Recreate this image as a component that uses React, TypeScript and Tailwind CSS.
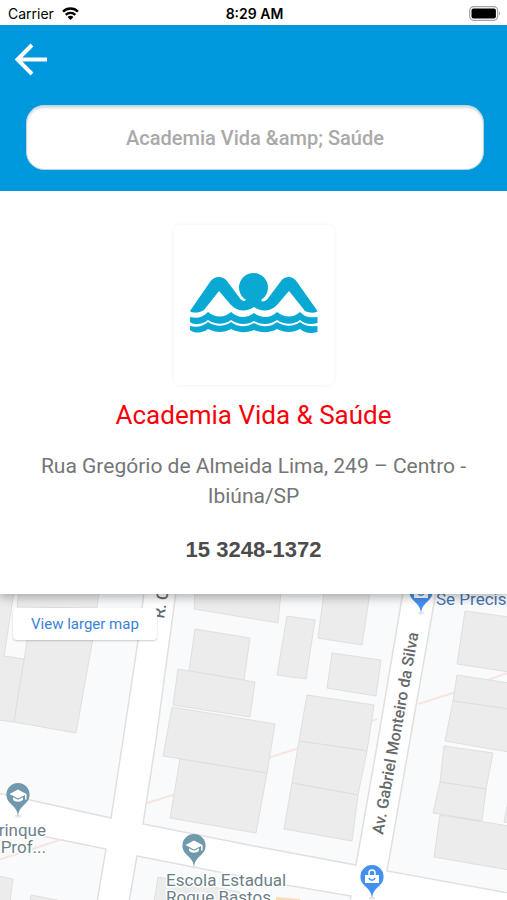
import { useState } from "react";

const blocks = [
    "-2,-2 144,-2 138,47 123,146 111,224 30,206 -2,199",
    "176,-2 156,146 143,230 254,252 356,271 378,146 403,-2",
    "436,-2 410,146 387,277 509,299 509,-2",
    "-2,233 47,243 106,255 97,308 -2,308",
    "137,262 286,291 351,302 350,308 129,308",
];

const buildings = [
    "-2,-2 14,-2 4,62 24,65 14,128 -2,126",
    "19,-2 99,-2 97,14 17,13",
    "29,35 93,44 76,139 14,128",
    "195,-2 281,-2 278,29 194,15",
    "195,35 250,44 244,86 189,77",
    "178,75 255,88 250,123 173,111",
    "172,113 275,130 267,179 163,162",
    "180,165 267,179 256,239 170,224",
    "287,22 315,26 306,85 277,81",
    "324,-2 370,-2 362,51 318,44",
    "332,59 381,66 376,102 327,94",
    "307,101 374,111 367,157 299,147",
    "299,147 367,157 358,201 292,189",
    "292,189 358,201 352,247 284,235",
    "465,17 509,23 509,78 457,70",
    "457,81 509,89 509,115 453,107",
    "453,107 509,115 509,158 445,147",
    "444,152 493,159 486,195 440,188",
    "440,188 486,195 482,227 433,219",
    "440,221 509,232 509,276 434,263",
    "507,212 509,212 509,229 504,228",
    "-2,282 13,285 10,308 -2,308",
    "31,301 62,307 30,308",
    "158,283 240,298 238,308 154,308",
];

function Pin({ x, y, color, type }: { x: number; y: number; color: string; type: "school" | "shop" }) {
    return (
        <g transform={`translate(${x} ${y})`}>
            <ellipse cx="0" cy="21" rx="3" ry="1.5" fill="#e6e6e6" />
            <path d="M0 21C-1 14-4 12-8 8A11.6 11.6 0 1 1 8 8C4 12 1 14 0 21Z" fill={color} />
            {type === "school" ? (
                <g fill="#fff">
                    <path d="M-8.500 -1L0 -5.500L8.500 -1V4.500H7V0L0 3.500Z" />
                    <path d="M-5 2.200L0 4.800L5 2.200V4.500C3 7.500-3 7.500-5 4.500Z" />
                </g>
            ) : (
                <g>
                    <path d="M-7 -2H7V6H-7Z" fill="#fff" />
                    <path d="M-3 -2V-4A3 3 0 0 1 3 -4V-2" fill="none" stroke="#fff" strokeWidth="1.5" />
                    <path d="M-3 1C-2 4 2 4 3 1" fill="none" stroke={color} strokeWidth="1.5" />
                </g>
            )}
        </g>
    );
}

function StatusBar() {
    return (
        <div className="grid h-[25px] grid-cols-3 items-center bg-white pl-2 pr-[6px] pt-[2px] font-[Inter,sans-serif] text-sm text-black">
            <div className="flex items-center gap-2">
                <span>Carrier</span>
                <svg width="17" height="13" viewBox="0 0 17 13" fill="none" stroke="#000" strokeWidth="2.4">
                    <path d="M1 4.6C5.2 .5 11.8 .5 16 4.6" />
                    <path d="M3.7 7.800C6.300 5.200 10.700 5.200 13.300 7.800" />
                    <path d="M8.5 13L5.6 10C7.200 8.400 9.800 8.400 11.400 10Z" fill="#000" stroke="none" />
                </svg>
            </div>
            <span className="text-center font-semibold">8:29 AM</span>
            <svg className="justify-self-end" width="32" height="15" viewBox="0 0 32 15">
                <rect x=".7" y=".7" width="28" height="13.6" rx="4" fill="none" stroke="#a3a3a3" strokeWidth="1.2" />
                <rect x="2.5" y="2.5" width="24.4" height="10" rx="2" fill="#000" />
                <path d="M30 5.5Q32 7.5 30 9.5Z" fill="#a3a3a3" />
            </svg>
        </div>
    );
}

function Logo() {
    return (
        <svg width="128" height="60" viewBox="0 0 128 60" fill="#09a9d3" role="img" aria-label="Academia Vida & Saúde">
            <circle cx="63.500" cy="14.500" r="14.500" />
            <path d="M0 38L20 9C24 2.500 33 2.500 37 8L49 24C51 27 53 28.500 55 28L56 26H71L72 28.500C75 28.500 77 27 79 24L91 8C95 2.500 103 2.500 107 9L127.500 38C126 40.500 119 40 115 38L99 18L87 32C80 39 71 39 64 34C57 39 48 39 41 32L29 18L14 37C10 40 2 40.500 0 38Z" />
            <path d="M0 44C8 46 13 44 18 39C26 45 34 45 41 39C49 46 57 45 64 40C71 45 80 46 87 39C95 45 103 45 110 39C115 44 120 45 127.500 44V50C120 52 115 51 110 47C103 52 95 52 87 47C80 52 71 52 64 48C57 52 49 52 41 47C34 52 26 52 18 47C13 51 5 53 0 49Z" />
            <path d="M0 53C8 55 13 53 18 49C26 54 34 54 41 49C49 55 57 54 64 50C71 54 80 55 87 49C95 54 103 54 110 49C115 53 120 54 127.500 53V59C120 61 115 60 110 56C103 60 95 60 87 56C80 60 71 60 64 57C57 60 49 60 41 56C34 60 26 60 18 56C13 60 5 61 0 57Z" />
        </svg>
    );
}

function Map() {
    return (
        <svg className="block h-full w-full" viewBox="0 0 507 306" preserveAspectRatio="xMidYMin slice" fontFamily="Roboto, sans-serif" fontSize="17">
            <rect x="-2" y="-2" width="511" height="310" fill="#fff" />
            <g fill="#f8fafb" stroke="#dfe0e0" strokeWidth="1.5">
                {blocks.map((b) => <polygon key={b} points={b} />)}
            </g>
            <g fill="none" stroke="#fae3e3" strokeWidth="2">
                <path d="M-2 266L60 246" />
                <path d="M147 209L173 201L271 163L296 155L377 125M418 110L453 99L507 79" />
            </g>
            <g fill="#ececec" stroke="#dfdfdf" strokeWidth="1">
                {buildings.map((b) => <polygon key={b} points={b} />)}
            </g>
            <path d="M276 303L300 305V308H276Z" fill="#fbdcb5" />

            <g fill="#66696c" stroke="#fff" strokeWidth="3" paintOrder="stroke" fontSize="16" fontWeight="500">
                <text transform="translate(164 25) rotate(-81)">R. C</text>
                <text transform="translate(383 241) rotate(-80)">Av. Gabriel Monteiro da Silva</text>
            </g>

            <Pin x={421} y={-2} color="#4490ed" type="shop" />
            <Pin x={372} y={283} color="#4490ed" type="shop" />
            <Pin x={18} y={201} color="#7199ad" type="school" />
            <Pin x={194} y={252} color="#7199ad" type="school" />

            <g fill="#6c7f88" stroke="#fff" strokeWidth="3" paintOrder="stroke">
                <text x="46" y="242" textAnchor="end">rinque</text>
                <text x="46" y="259" textAnchor="end">Prof...</text>
                <text x="166" y="292">Escola Estadual</text>
                <text x="166" y="309">Roque Bastos</text>
                <text x="436" y="11" fill="#4475b8">Se Precis</text>
            </g>
        </svg>
    );
}

export default function App() {
    const [search, setSearch] = useState<string>("");

    return (
        <div className="flex h-screen min-h-[700px] flex-col overflow-hidden bg-white font-[Roboto,sans-serif]">
            <StatusBar />
            <header className="relative z-20 bg-[#0098dc] pb-[21px] pl-[26px] pr-[23px] pt-4">
                <button aria-label="Voltar" className="-ml-3 block">
                    <svg width="34" height="36" viewBox="0 0 34 36" fill="none" stroke="#fff" strokeWidth="4">
                        <path d="M33 18.500H4M18 4L3.500 18.500L18 33" />
                    </svg>
                </button>
                <input
                    type="text"
                    aria-label="Buscar"
                    value={search}
                    onChange={(e) => setSearch(e.target.value)}
                    placeholder={"Academia Vida &amp; Saúde"}
                    className="mt-7 block h-[65px] w-full rounded-[18px] border border-[#b9d5e2] bg-white text-center text-[20px] font-medium text-[#777] shadow-[inset_0_2px_2px_#d5dcdd] placeholder:text-[#a9a9a9] focus:outline-none"
                />
            </header>

            <main className="relative z-10 flex flex-col items-center bg-white px-8 pb-[29px] pt-[34px] text-center shadow-[0_3px_10px_rgba(0,0,0,0.3)]">
                <div className="flex h-40 w-40 items-center justify-center rounded-md bg-white pb-1 shadow-[0_0_5px_rgba(0,0,0,0.06)]">
                    <Logo />
                </div>
                <h1 className="mt-3 text-[26px] leading-9 text-[#fb0007]">Academia Vida &amp; Saúde</h1>
                <p className="mt-[18px] text-[21px] leading-[30px] text-[#757575]">Rua Gregório de Almeida Lima, 249 – Centro - Ibiúna/SP</p>
                <a href="tel:1532481372" className="mt-6 font-['Liberation_Sans',sans-serif] text-[22px] font-bold leading-[30px] text-[#4c4c4c]">15 3248-1372</a>
            </main>

            <section className="relative min-h-0 flex-1">
                <Map />
                <a href="#map" className="absolute left-[13px] top-[14px] rounded-sm bg-white px-[18px] py-1 text-[15px] leading-6 text-[#3c82d8] shadow-[0_1px_2px_rgba(0,0,0,0.2)]">
                    View larger map
                </a>
            </section>
        </div>
    );
}
